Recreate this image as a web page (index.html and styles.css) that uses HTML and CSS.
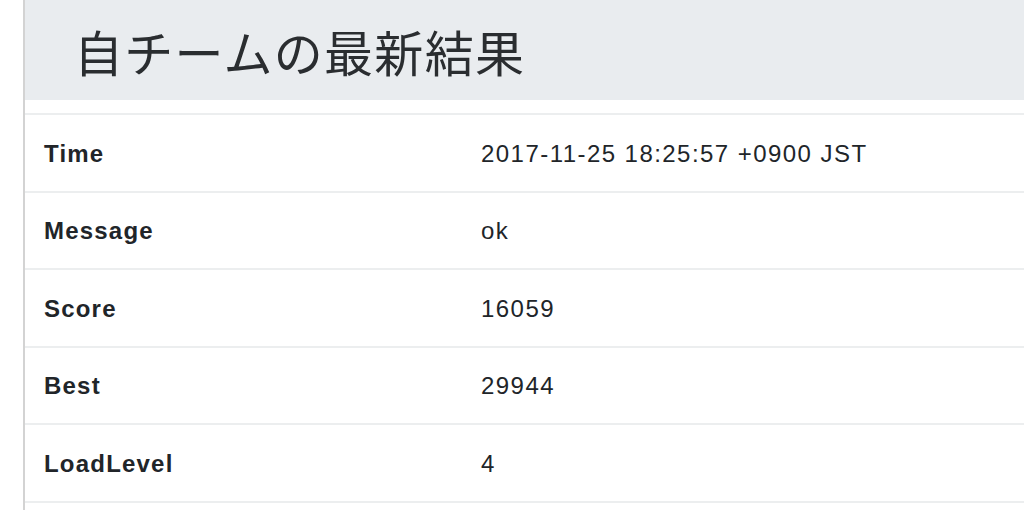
FILE: index.html
```html
<!DOCTYPE html>
<html lang="ja">
<head>
<meta charset="utf-8">
<link rel="stylesheet" href="styles.css">
</head>
<body>
<div class="page">
  <header class="hero">
    <h1 class="title">自チームの最新結果</h1>
  </header>
  <div class="table">
    <div class="row"><div class="label">Time</div><div class="value">2017-11-25 18:25:57 +0900 JST</div></div>
    <div class="row"><div class="label">Message</div><div class="value">ok</div></div>
    <div class="row"><div class="label">Score</div><div class="value">16059</div></div>
    <div class="row"><div class="label">Best</div><div class="value">29944</div></div>
    <div class="row"><div class="label">LoadLevel</div><div class="value">4</div></div>
  </div>
</div>
</body>
</html>
```
FILE: styles.css
```css
html, body {
  margin: 0;
  padding: 0;
  background: #ffffff;
}
body {
  font-family: "Liberation Sans", Arial, sans-serif;
  color: #212529;
  overflow: hidden;
}
.page {
  margin-left: 23px;
  border-left: 2px solid #d3d3d3;
  min-height: 510px;
}
.hero {
  height: 100px;
  background: #e9ecef;
  display: flex;
  align-items: center;
  padding-left: 49px;
  margin-bottom: 13px;
}
.title {
  margin: 0;
  font-family: "Noto Sans CJK JP", sans-serif;
  font-weight: 400;
  font-size: 49px;
  line-height: 1;
  color: #2a2d30;
  letter-spacing: 1.3px;
}
.table {
  display: flex;
  flex-direction: column;
}
.row {
  display: grid;
  grid-template-columns: 437px 1fr;
  align-items: center;
  height: 75.5px;
  border-top: 2px solid #eceeef;
}
.row:last-child {
  border-bottom: 2px solid #eceeef;
}
.label, .value {
  padding-left: 19px;
  padding-top: 2px;
  font-size: 24px;
  line-height: 1;
}
.label {
  font-weight: 700;
  letter-spacing: 1.2px;
}
.value {
  letter-spacing: 1.45px;
}
```
